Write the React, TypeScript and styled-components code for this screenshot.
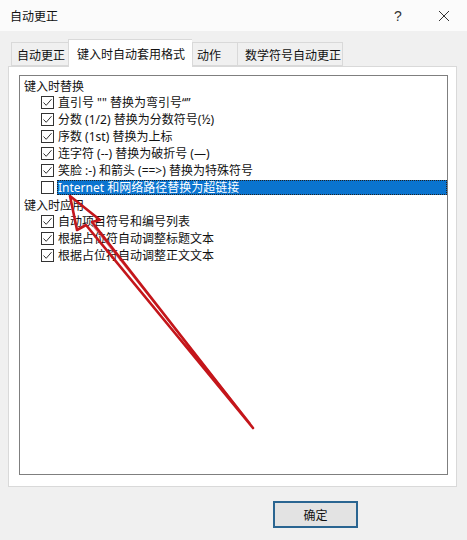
import styled, { createGlobalStyle } from "styled-components";

const GlobalStyle = createGlobalStyle`
  html, body {
    margin: 0;
    padding: 0;
    background: #f0f0f0;
  }
  body {
    font-family: "Noto Sans", "Noto Sans CJK SC", sans-serif;
    font-size: 12px;
    color: #000000;
  }
`;

interface TabProps {
  active?: boolean;
  w: number;
  pad: number;
}

interface RowProps {
  selected?: boolean;
}

const replaceItems = [
  { label: "直引号 \"\" 替换为弯引号“”", checked: true },
  { label: "分数 (1/2) 替换为分数符号(½)", checked: true },
  { label: "序数 (1st) 替换为上标", checked: true },
  { label: "连字符 (--) 替换为破折号 (—)", checked: true },
  { label: "笑脸 :-) 和箭头 (==>) 替换为特殊符号", checked: true },
  { label: "Internet 和网络路径替换为超链接", checked: false, selected: true },
];

const applyItems = [
  { label: "自动项目符号和编号列表", checked: true },
  { label: "根据占位符自动调整标题文本", checked: true },
  { label: "根据占位符自动调整正文文本", checked: true },
];

const tabs = [
  { label: "自动更正", w: 57, pad: 5 },
  { label: "键入时自动套用格式", w: 124, pad: 8 },
  { label: "动作", w: 45, pad: 4 },
  { label: "数学符号自动更正", w: 106, pad: 7 },
];

function CheckBox({ checked }: { checked: boolean }) {
  return (
    <Box>
      {checked && (
        <svg width="11" height="11" viewBox="0 0 11 11">
          <path d="M1.5 5.5 L4.2 8.3 L9.5 2.2" fill="none" stroke="#333" strokeWidth="1" />
        </svg>
      )}
    </Box>
  );
}

export default function App() {
  return (
    <>
      <GlobalStyle />
      <Window>
        <TitleBar>
          <Title>自动更正</Title>
          <TitleButtons>
            <HelpButton>?</HelpButton>
            <CloseButton>
              <svg width="12" height="12" viewBox="0 0 12 12">
                <path d="M1 1 L11 11 M11 1 L1 11" stroke="#333" strokeWidth="1" />
              </svg>
            </CloseButton>
          </TitleButtons>
        </TitleBar>
        <Content>
          <TabStrip>
            {tabs.map((t, i) => (
              <Tab key={t.label} active={i === 1} w={t.w} pad={t.pad}>
                {t.label}
              </Tab>
            ))}
          </TabStrip>
          <Panel>
            <GroupBox>
              <Heading>键入时替换</Heading>
              {replaceItems.map((item) => (
                <Row key={item.label}>
                  <CheckBox checked={item.checked} />
                  <Label selected={item.selected}>{item.label}</Label>
                </Row>
              ))}
              <Heading>键入时应用</Heading>
              {applyItems.map((item) => (
                <Row key={item.label}>
                  <CheckBox checked={item.checked} />
                  <Label>{item.label}</Label>
                </Row>
              ))}
            </GroupBox>
            <Arrow width="467" height="540" viewBox="0 0 467 540">
              <g fill="none" stroke="#c4161b" strokeWidth="2.6" strokeLinejoin="round" strokeLinecap="round">
                <path d="M253 428 L86 225 L77 230 L70 196 L100 220 L92 222 L253 428" />
                <path d="M250 423 L94 227" strokeWidth="1.4" opacity="0.6" />
              </g>
            </Arrow>
          </Panel>
          <Footer>
            <OkButton>确定</OkButton>
          </Footer>
        </Content>
      </Window>
    </>
  );
}

const Window = styled.div`
  width: 467px;
  height: 540px;
  display: flex;
  flex-direction: column;
  background: #f0f0f0;
  position: relative;
  overflow: hidden;
`;

const TitleBar = styled.div`
  height: 31px;
  background: #fbfbfb;
  display: flex;
  align-items: center;
  justify-content: space-between;
  padding-left: 10px;
`;

const Title = styled.div`
  font-family: "Noto Sans CJK SC", sans-serif;
  font-size: 12px;
  color: #111;
`;

const TitleButtons = styled.div`
  display: flex;
  align-items: center;
  height: 100%;
`;

const HelpButton = styled.div`
  width: 46px;
  text-align: center;
  font-family: "Liberation Sans", sans-serif;
  font-size: 14px;
  color: #333;
  padding-left: 4px;
`;

const CloseButton = styled.div`
  width: 46px;
  display: flex;
  justify-content: center;
  align-items: center;
`;

const Content = styled.div`
  flex: 1;
  display: flex;
  flex-direction: column;
  padding: 0 10px 0 8px;
`;

const TabStrip = styled.div`
  display: flex;
  align-items: flex-end;
  margin-top: 8px;
  padding-left: 3px;
  height: 27px;
  position: relative;
  z-index: 1;
`;

const Tab = styled.div<TabProps>`
  width: ${(p) => p.w}px;
  height: ${(p) => (p.active ? "28px" : "24px")};
  margin-bottom: ${(p) => (p.active ? "-1px" : "0")};
  padding-left: ${(p) => p.pad}px;
  display: flex;
  align-items: center;
  box-sizing: border-box;
  border: 1px solid #d9d9d9;
  border-bottom: ${(p) => (p.active ? "none" : "1px solid #d9d9d9")};
  border-right: none;
  background: ${(p) => (p.active ? "#ffffff" : "#f0f0f0")};
  font-family: "Noto Sans CJK SC", sans-serif;
  font-size: 12px;
  white-space: nowrap;
  color: #111;
  &:last-child {
    border-right: 1px solid #d9d9d9;
  }
`;

const Panel = styled.div`
  height: 421px;
  box-sizing: border-box;
  border: 1px solid #d9d9d9;
  background: #ffffff;
  padding: 8px 8px 11px 10px;
  display: flex;
  flex-direction: column;
`;

const GroupBox = styled.div`
  flex: 1;
  border: 1px solid #7f7f7f;
  padding: 1px 0 0 4px;
`;

const Heading = styled.div`
  height: 17px;
  line-height: 17px;
  font-family: "Noto Sans CJK SC", sans-serif;
  font-size: 12px;
  color: #111;
`;

const Row = styled.div`
  height: 17px;
  display: flex;
  align-items: center;
  padding-left: 17px;
`;

const Box = styled.div`
  width: 13px;
  height: 13px;
  box-sizing: border-box;
  border: 1px solid #333;
  background: #fff;
  display: flex;
  align-items: center;
  justify-content: center;
  flex-shrink: 0;
`;

const Label = styled.div<RowProps>`
  flex: 1;
  margin-left: 3px;
  height: 15px;
  line-height: 15px;
  padding-left: 1px;
  font-size: 12px;
  white-space: nowrap;
  box-sizing: border-box;
  color: ${(p) => (p.selected ? "#ffffff" : "#111")};
  background: ${(p) => (p.selected ? "#0a74cf" : "transparent")};
  outline: ${(p) => (p.selected ? "1px dotted #222" : "none")};
  outline-offset: -1px;
`;

const Arrow = styled.svg`
  position: absolute;
  left: 0;
  top: 0;
  pointer-events: none;
`;

const Footer = styled.div`
  flex: 1;
  display: flex;
  justify-content: flex-end;
  align-items: flex-start;
  padding-top: 14px;
  padding-right: 99px;
`;

const OkButton = styled.div`
  width: 85px;
  height: 27px;
  box-sizing: border-box;
  border: 2px solid #2a6591;
  background: #e3e3e3;
  display: flex;
  align-items: center;
  justify-content: center;
  font-family: "Noto Sans CJK SC", sans-serif;
  font-size: 12px;
  color: #111;
`;
